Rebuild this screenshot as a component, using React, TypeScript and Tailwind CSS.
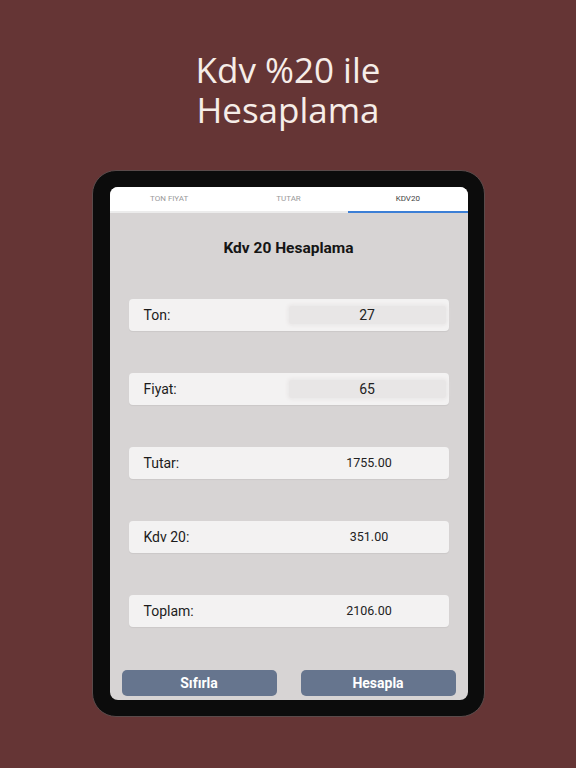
import React from "react";

const rows = [
  { label: "Ton:", value: "27", input: true },
  { label: "Fiyat:", value: "65", input: true },
  { label: "Tutar:", value: "1755.00", input: false },
  { label: "Kdv 20:", value: "351.00", input: false },
  { label: "Toplam:", value: "2106.00", input: false },
];

const tabs = ["TON FIYAT", "TUTAR", "KDV20"];

export default function App() {
  return (
    <div className="h-[768px] w-full bg-[#653535] flex flex-col items-center overflow-hidden">
      <h1 className="mt-[50px] flex flex-col items-center text-[35px] leading-[40px] font-medium text-[#f6ede8] font-['Open_Sans',sans-serif]">
        <span>Kdv %20 ile</span>
        <span>Hesaplama</span>
      </h1>

      <div className="mt-[40px] w-[393px] h-[547px] rounded-[24px] bg-[#0c0c0c] border border-[#5a4a4a] pl-[17px] pr-[16px] pt-[16px] pb-[16px]">
        <div className="h-full w-full rounded-[8px] overflow-hidden bg-[#d7d4d4] flex flex-col font-['Roboto',sans-serif]">
          <div className="h-[26px] bg-white grid grid-cols-3 shrink-0">
            {tabs.map((t, i) => (
              <div
                key={t}
                className={
                  i === 2
                    ? "flex items-center justify-center text-[8px] text-[#444] border-b-2 border-[#3c7fd6]"
                    : "flex items-center justify-center text-[8px] text-[#9a9a9a] border-b-2 border-[#ececec]"
                }
              >
                {t}
              </div>
            ))}
          </div>

          <div className="text-center mt-[24px] text-[15.5px] leading-[22px] font-bold text-[#151515]">
            Kdv 20 Hesaplama
          </div>

          <div className="flex flex-col gap-[42px] mt-[40px] px-[19px]">
            {rows.map((r) => (
              <div
                key={r.label}
                className="h-[32px] rounded-[4px] bg-[#f3f2f2] flex items-center pl-[15px] pr-[3px] shadow-[0_1px_1px_rgba(0,0,0,0.06)]"
              >
                <span className="w-[145px] text-[14px] text-[#1c1c1c]">{r.label}</span>
                <div
                  className={
                    r.input
                      ? "flex-1 h-[18px] rounded-[3px] bg-[#e8e6e6] shadow-[0_0_3px_2px_#ebe9e9] flex items-center justify-center text-[14px] text-[#222]"
                      : "flex-1 h-[18px] flex items-center justify-center text-[12.5px] text-[#222] pl-[4px]"
                  }
                >
                  {r.value}
                </div>
              </div>
            ))}
          </div>

          <div className="mt-auto mb-[4px] px-[12px] flex justify-between">
            <button className="w-[155px] h-[26px] rounded-[5px] bg-[#66758e] text-white text-[14px] font-bold">
              Sıfırla
            </button>
            <button className="w-[155px] h-[26px] rounded-[5px] bg-[#66758e] text-white text-[14px] font-bold">
              Hesapla
            </button>
          </div>
        </div>
      </div>
    </div>
  );
}
